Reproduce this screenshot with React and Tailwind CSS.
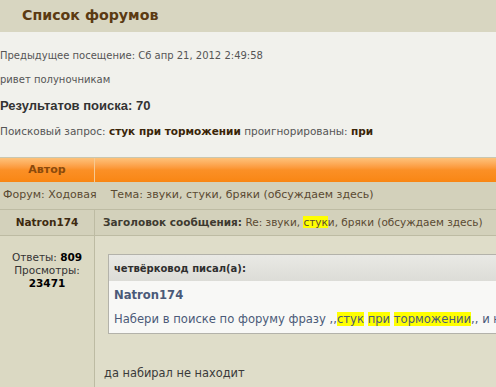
import React from 'react'

const hl = 'bg-[#ffff00]'

function App() {
  return (
    <div className="w-[496px] h-[387px] overflow-hidden bg-[#f1f1ec] font-['DejaVu_Sans',sans-serif]">
      <div className="w-[760px]">
        <div className="h-[32px] bg-[#d8d6c1] pl-[22px] flex items-center">
          <h1 className="text-[14.2px] font-bold text-[#5b3a12]">Список форумов</h1>
        </div>

        <div className="text-[10px] text-[#555]">
          <p className="mt-[14px] h-[20px] leading-[20px]">Предыдущее посещение: Сб апр 21, 2012 2:49:58</p>
          <p className="mt-[4px] h-[20px] leading-[20px]">ривет полуночникам</p>
          <p className="mt-[6px] h-[20px] leading-[20px] font-['Liberation_Sans',sans-serif] text-[13px] font-bold text-[#333]">Результатов поиска: 70</p>
          <p className="mt-[5px] h-[20px] leading-[20px] text-[10.5px]">
            Поисковый запрос: <b className="text-[#3a2508]">стук при торможении</b> проигнорированы: <b className="text-[#3a2508]">при</b>
          </p>
        </div>

        <div className="mt-[16px] border-t border-[#c9c7b0]">
          <div className="flex h-[24px] bg-gradient-to-b from-[#fdc27a] via-[#fb9026] to-[#f98612]">
            <div className="w-[95px] flex items-center justify-center border-r border-[#f6c992] text-[11px] font-bold text-[#8a4a0c]">Автор</div>
            <div className="flex-1"></div>
          </div>

          <div className="h-[28px] bg-[#d3d1bb] border-b border-[#bdbba3] flex items-center pl-[3px] text-[11px] text-[#5a4a32]">
            <span>Форум: Ходовая</span>
            <span className="ml-[14px]">Тема: звуки, стуки, бряки (обсуждаем здесь)</span>
          </div>

          <div className="h-[26px] bg-[#d3d1bb] border-b border-[#bdbba3] flex text-[10.5px]">
            <div className="w-[95px] flex items-center justify-center border-r border-[#bdbba3] font-bold text-[#3e2a10]">Natron174</div>
            <div className="flex-1 flex items-center pl-[8px] text-[#5a4a32]">
              <span>
                <b className="text-[#3e3a30]">Заголовок сообщения:</b> Re: звуки, <span className={hl}>стук</span>и, бряки (обсуждаем здесь)
              </span>
            </div>
          </div>

          <div className="flex h-[200px]">
            <div className="w-[95px] bg-[#dbd9c3] border-r border-[#bdbba3] pt-[15px] text-center text-[10.5px] leading-[13px] text-[#333]">
              <div>Ответы: <b className="text-black">809</b></div>
              <div>Просмотры:</div>
              <div className="font-bold text-black">23471</div>
            </div>
            <div className="flex-1 bg-[#dfddc9] pt-[18px] pl-[13px]">
              <div className="border border-[#b3b2aa] w-[600px]">
                <div className="h-[26px] bg-gradient-to-b from-[#e9e9e5] to-[#dcdcd7] flex items-center pl-[5px] text-[10px] font-semibold text-[#2f2f2f]">
                  четвёрковод писал(а):
                </div>
                <div className="bg-[#f8f8f6] pl-[5px] pt-[6px] pb-[6px] text-[11.6px] text-[#4b5a78]">
                  <div className="h-[16px] leading-[16px] font-bold">Natron174</div>
                  <div className="mt-[8px] h-[16px] leading-[16px] whitespace-nowrap">
                    Набери в поиске по форуму фразу ,,<span className={hl}>стук</span> <span className={hl}>при</span> <span className={hl}>торможении</span>,, и не находит
                  </div>
                </div>
              </div>
              <p className="mt-[31px] -ml-[4px] text-[11.4px] text-[#3a3a3a]">да набирал не находит</p>
            </div>
          </div>
        </div>
      </div>
    </div>
  )
}

export default App
